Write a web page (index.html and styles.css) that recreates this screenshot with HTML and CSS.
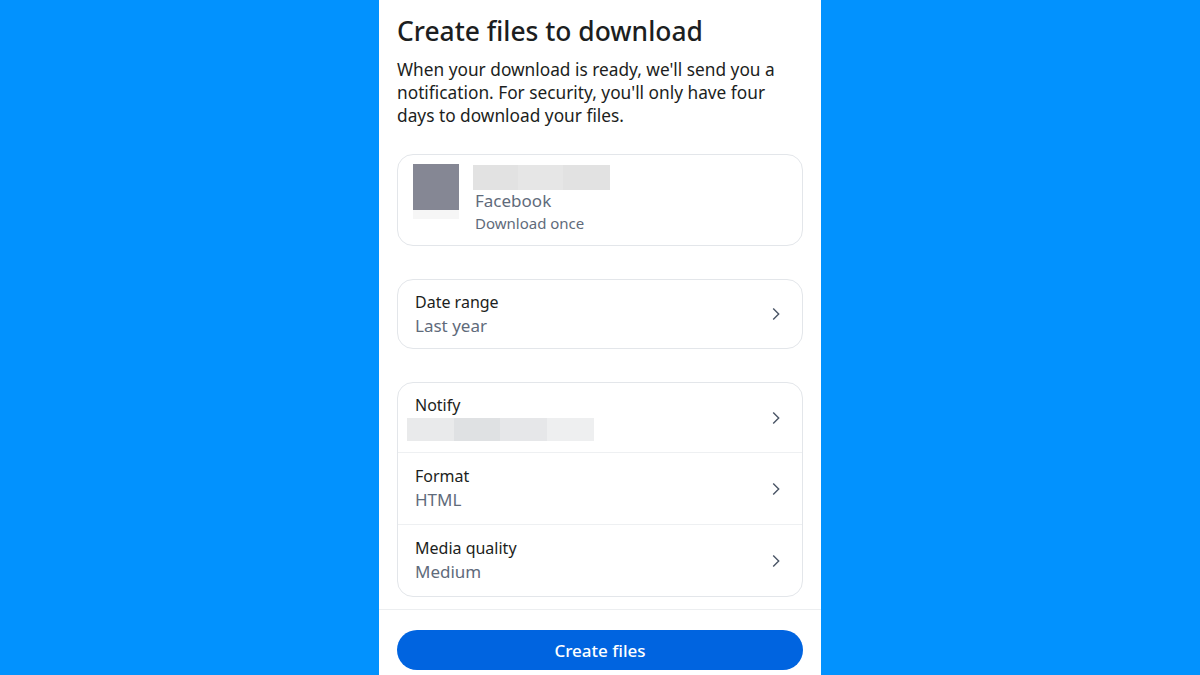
FILE: index.html
```html
<!DOCTYPE html>
<html lang="en">
<head>
  <meta charset="UTF-8">
  <meta name="viewport" content="width=device-width, initial-scale=1.0">
  <title>Create files to download</title>
  <link rel="stylesheet" href="styles.css">
</head>
<body>
  <div class="screen">
    <div class="content">
      <h1 class="title">Create files to download</h1>
      <p class="description">When your download is ready, we'll send you a notification. For security, you'll only have four days to download your files.</p>

      <!-- Profile card -->
      <div class="card profile">
        <div class="thumb"></div>
        <div class="profile-text">
          <div class="blur blur-name"></div>
          <div class="app-name">Facebook</div>
          <div class="app-sub">Download once</div>
        </div>
      </div>

      <div class="card">
        <div class="row">
          <div class="row-text">
            <div class="label">Date range</div>
            <div class="value">Last year</div>
          </div>
          <svg class="chevron" viewBox="0 0 8 14"><path d="M1.2 1.5l5.5 5.5-5.5 5.5"/></svg>
        </div>
      </div>

      <div class="card last">
        <div class="row">
          <div class="row-text">
            <div class="label">Notify</div>
            <div class="blur blur-email"></div>
          </div>
          <svg class="chevron" viewBox="0 0 8 14"><path d="M1.2 1.5l5.5 5.5-5.5 5.5"/></svg>
        </div>
        <div class="row">
          <div class="row-text">
            <div class="label">Format</div>
            <div class="value">HTML</div>
          </div>
          <svg class="chevron" viewBox="0 0 8 14"><path d="M1.2 1.5l5.5 5.5-5.5 5.5"/></svg>
        </div>
        <div class="row">
          <div class="row-text">
            <div class="label">Media quality</div>
            <div class="value">Medium</div>
          </div>
          <svg class="chevron" viewBox="0 0 8 14"><path d="M1.2 1.5l5.5 5.5-5.5 5.5"/></svg>
        </div>
      </div>
    </div>

    <div class="footer">
      <button class="primary">Create files</button>
    </div>
  </div>
</body>
</html>
```

FILE: styles.css
```css
/* Page */
body {
  margin: 0;
  height: 675px;
  background: #0292fe;
  display: flex;
  justify-content: center;
  font-family: 'Noto Sans', sans-serif;
  overflow: hidden;
}

.screen {
  width: 442px;
  height: 675px;
  background: #fff;
}

.content {
  padding: 13px 18px 0;
}

.title {
  margin: 0;
  font-size: 26.4px;
  line-height: 36px;
  font-weight: 500;
  color: #1c1e21;
}

.description {
  margin: 9px 0 27px;
  max-width: 388px;
  font-size: 17.3px;
  line-height: 23px;
  color: #1c1e21;
}

/* Cards */
.card {
  box-sizing: border-box;
  border: 1.5px solid #e3e6ea;
  border-radius: 16px;
  margin-bottom: 33px;
  overflow: hidden;
}

.card.last {
  margin-bottom: 12px;
}

.profile {
  display: flex;
  gap: 14px;
  padding: 8.5px 15px 0;
  height: 92px;
}

.thumb {
  width: 46px;
  height: 46px;
  background: #858794;
  box-shadow: 0 9px 0 #f6f6f6;
}

.profile-text {
  padding-top: 1px;
}

.blur {
  background: linear-gradient(90deg, #e9eaeb 0 25%, #dfe1e3 25% 50%, #e6e7e9 50% 75%, #eeeff0 75%);
}

.blur-name {
  width: 137px;
  height: 25px;
  background: linear-gradient(90deg, #e2e2e2 0 33%, #e6e6e6 33% 66%, #e2e2e2 66%);
}

.app-name {
  font-size: 17px;
  line-height: 22px;
  color: #5f6b7b;
  margin-left: 2px;
}

.app-sub {
  font-size: 15px;
  line-height: 22px;
  color: #5f6b7b;
  margin-left: 2px;
}

.row {
  display: flex;
  align-items: center;
  justify-content: space-between;
  height: 71px;
  padding: 0 22px 0 17px;
  border-top: 1px solid #eef0f2;
}

.row:first-child {
  border-top: none;
  height: 68px;
}

.last .row:first-child {
  height: 69px;
}

.label {
  font-size: 16px;
  line-height: 23px;
  color: #1c1e21;
}

.value {
  font-size: 17px;
  line-height: 24px;
  color: #5f6b7b;
}

.blur-email {
  width: 187px;
  height: 23px;
  margin: 1px 0 0 -8px;
}

.chevron {
  width: 8px;
  height: 14px;
  fill: none;
  stroke: #4a5566;
  stroke-width: 1.4;
}

/* Footer button */
.footer {
  border-top: 1px solid #eceef0;
  padding: 20px 18px 0;
}

.primary {
  width: 100%;
  height: 40px;
  border: none;
  border-radius: 20px;
  background: #0064e0;
  color: #fff;
  font-family: 'Noto Sans', sans-serif;
  font-size: 17px;
  font-weight: 500;
}
```
